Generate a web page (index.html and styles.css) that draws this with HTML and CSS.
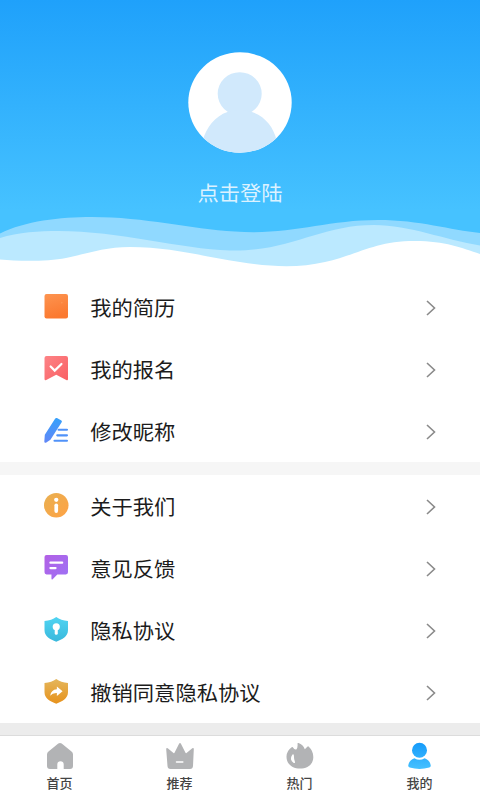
FILE: index.html
```html
<!DOCTYPE html>
<html lang="zh-CN">
<head>
<meta charset="utf-8">
<title>我的</title>
<link rel="stylesheet" href="styles.css">
</head>
<body>
<div class="page">
  <header class="hero">
    <svg class="avatar" viewBox="0 0 104 101">
      <defs><clipPath id="face"><ellipse cx="52" cy="50.5" rx="51.7" ry="50.2"/></clipPath></defs>
      <ellipse cx="52" cy="50.5" rx="51.7" ry="50.2" fill="#fff"/>
      <g clip-path="url(#face)" fill="#d1e9fc">
        <ellipse cx="51.7" cy="41.7" rx="22" ry="21.5"/>
        <path d="M15 101V88C18 76 27 64 39.500 60Q51.700 56 64 60C77 64 86 76 88.500 88V101Z"/>
      </g>
    </svg>
    <div class="login">点击登陆</div>
    <svg class="waves" viewBox="0 0 480 66">
      <path fill="#90d9ff" d="M0 23.500C25 11 60 7 92 7C145 7 190 19 235 21.500C290 25.500 325 10 378 10C420 10 450 20 480 23V66H0Z"/>
      <path fill="#bbe9ff" d="M0 28C18 22 40 21 58 21C120 21 180 39 230 40.500C290 42 320 15 374 15C410 15 445 30 480 35.500V66H0Z"/>
      <path fill="#fff" d="M0 49.500C20 51.500 48 51.500 66 48C90 43 105 37 130 37C172 37 205 47 240 52C270 57 300 58 325 52C360 44 375 31 415 31C445 31 462 38 480 44V66H0Z"/>
    </svg>
  </header>
  <main class="menu">
    <section class="group">
      <div class="row">
        <svg class="icon" viewBox="0 0 24 24"><defs><linearGradient id="or" x2="0.300" y2="1"><stop stop-color="#fd9450"/><stop offset="1" stop-color="#fb7930"/></linearGradient></defs><rect x=".5" width="23" height="24" rx="2" fill="url(#or)"/><circle cx="17.500" cy="8.500" r=".7" fill="#ff9c58"/></svg>
        <span class="label">我的简历</span><svg class="arrow" viewBox="0 0 10 16"><path d="M1 1l7.500 7L1 15"/></svg>
      </div>
      <div class="row">
        <svg class="icon" viewBox="0 0 24 24"><defs><linearGradient id="rd" x2="1" y2="1"><stop stop-color="#fd8386"/><stop offset="1" stop-color="#f96064"/></linearGradient></defs><path fill="url(#rd)" d="M2.500 0h19a2 2 0 0 1 2 2v20.500q0 2-1.700 1L12 18.300 2.200 23.600Q.5 24 .5 22.500V2a2 2 0 0 1 2-2Z"/><path class="line" d="M6.500 10.300l4 4 6.600-6.500"/></svg>
        <span class="label">我的报名</span><svg class="arrow" viewBox="0 0 10 16"><path d="M1 1l7.500 7L1 15"/></svg>
      </div>
      <div class="row">
        <svg class="icon" viewBox="0 0 24 24"><defs><linearGradient id="bl" x2="0" y2="1"><stop stop-color="#36a1fb"/><stop offset="1" stop-color="#6287f7"/></linearGradient></defs><path fill="url(#bl)" d="M11 .6q.7-1 1.700-.5l4.300 2.400q1 .7.300 1.700L6.300 21.200l-4 2.900Q.3 24.900.3 23.100L.8 16.500Z"/><path d="M14.300 11.500h8.200M13 17h9.500M10.300 22.300h12.200" fill="none" stroke="#5092f9" stroke-width="2.100" stroke-linecap="round"/></svg>
        <span class="label">修改昵称</span><svg class="arrow" viewBox="0 0 10 16"><path d="M1 1l7.500 7L1 15"/></svg>
      </div>
    </section>
    <section class="group">
      <div class="row">
        <svg class="icon" viewBox="0 0 24 24"><defs><linearGradient id="am" x2="1" y2="1"><stop stop-color="#e8b052"/><stop offset="1" stop-color="#ffa244"/></linearGradient></defs><circle cx="12" cy="12" r="12" fill="url(#am)"/><circle cx="12" cy="6.700" r="2.100" fill="#fff"/><path d="M12 12v5.700" stroke="#fff" stroke-width="3.600" stroke-linecap="round"/></svg>
        <span class="label">关于我们</span><svg class="arrow" viewBox="0 0 10 16"><path d="M1 1l7.500 7L1 15"/></svg>
      </div>
      <div class="row">
        <svg class="icon" viewBox="0 0 24 24"><defs><linearGradient id="pu" x2="1" y2="1"><stop stop-color="#b360e5"/><stop offset="1" stop-color="#9c72f5"/></linearGradient></defs><path fill="url(#pu)" d="M2.500 0h19a2 2 0 0 1 2 2v15a2 2 0 0 1-2 2H13l-4.500 4.700q-1.200.8-1.200-.7v-4H2.500a2 2 0 0 1-2-2V2a2 2 0 0 1 2-2Z"/><path class="line" d="M6.300 7.500h11.500M6.300 12.800h5"/></svg>
        <span class="label">意见反馈</span><svg class="arrow" viewBox="0 0 10 16"><path d="M1 1l7.500 7L1 15"/></svg>
      </div>
      <div class="row">
        <svg class="icon" viewBox="0 0 24 24"><defs><linearGradient id="cy" x2="0" y2="1"><stop stop-color="#50d4f2"/><stop offset="1" stop-color="#39b8dc"/></linearGradient></defs><path fill="url(#cy)" d="M12 0Q16.500 3.500 23.500 3.800V13C23.500 19 18 22 12 24.300C6 22 .5 19 .5 13V3.800Q7.500 3.500 12 0Z"/><circle cx="12" cy="9.500" r="3.500" fill="#fff"/><path d="M12 10v6" stroke="#fff" stroke-width="3" stroke-linecap="round"/></svg>
        <span class="label">隐私协议</span><svg class="arrow" viewBox="0 0 10 16"><path d="M1 1l7.500 7L1 15"/></svg>
      </div>
      <div class="row">
        <svg class="icon" viewBox="0 0 24 24"><defs><linearGradient id="go" x2="0" y2="1"><stop stop-color="#e4b65c"/><stop offset="1" stop-color="#e7921c"/></linearGradient></defs><path fill="url(#go)" d="M12 0Q16.500 3.500 23.500 3.800V13C23.500 19 18 22 12 24.300C6 22 .5 19 .5 13V3.800Q7.500 3.500 12 0Z"/><path fill="#fff" d="M12.600 7.400L18.200 12l-5.600 4.700v-2.900Q8.500 13.500 6 16.500Q6.800 10.500 12.600 10Z"/></svg>
        <span class="label">撤销同意隐私协议</span><svg class="arrow" viewBox="0 0 10 16"><path d="M1 1l7.500 7L1 15"/></svg>
      </div>
    </section>
  </main>
  <nav class="tabs">
    <div class="tab"><svg class="tab-icon" viewBox="0 0 28 28"><path d="M12.300 1.600q1.700-1.200 3.400 0L25.500 9.500q1.500 1.200 1.500 3V24q0 3-3 3h-6.300v-4.500a3.200 3.200 0 0 0-6.400 0V27H4q-3 0-3-3V12.500q0-1.800 1.500-3Z"/></svg><span>首页</span></div>
    <div class="tab"><svg class="tab-icon" viewBox="0 0 28 28"><path d="M1.700 6.200l5.800 4.800q.7.500 1-.2L13.200 1.500q.8-1.200 1.600 0l4.700 9.300q.3.700 1 .2l5.800-4.800q1.600-.7 1.500 1L27 24q-.2 3-3 3H4.500q-2.800 0-3-3L.2 7.200q0-1.700 1.500-1Z"/><path d="M10.500 20h6.300" stroke="#fff" stroke-width="1.500" stroke-linecap="round"/></svg><span>推荐</span></div>
    <div class="tab"><svg class="tab-icon" viewBox="0 0 28 28"><path d="M11.500 1.500q0-.8 1-.4Q17 2.500 18.800 7.200L21.600 4.500q.7-.5 1.200.2Q27.500 9 27.300 15.500C27 23 21 26.600 14 26.600S.3 22.500.5 14.500Q.7 8.500 6 5q.8-.3 1 .6Q8.300 8 10.300 7.500Q12 5.500 11.500 1.500Z"/><path d="M7 13.200Q4 17.500 8.200 20.200Q7 17 7 13.200Z" fill="#fff" stroke="#fff" stroke-width="1.700" stroke-linejoin="round"/></svg><span>热门</span></div>
    <div class="tab"><svg class="tab-icon" viewBox="0 0 28 28"><defs><linearGradient id="me" gradientUnits="userSpaceOnUse" x1="0" y1="1" x2="0" y2="27"><stop stop-color="#169bfa"/><stop offset="1" stop-color="#45c1ff"/></linearGradient></defs><g fill="url(#me)"><circle cx="13.500" cy="8.300" r="7.500"/><path d="M2.200 23.800Q3 18 8.400 16.300q5.100 3 10.200 0Q24 18 24.800 23.800q0 1.300-1.500 1.800Q13.500 28.300 3.700 25.600q-1.500-.5-1.500-1.800Z"/></g></svg><span>我的</span></div>
  </nav>
</div>
</body>
</html>
```
FILE: styles.css
```css
* { box-sizing: border-box; }
body {
  margin: 0;
  background: #fff;
  color: #1c1c1c;
  font-family: "Noto Sans CJK SC", sans-serif;
}
.page {
  display: flex;
  flex-direction: column;
  height: 800px;
  overflow: hidden;
}
.hero {
  display: flex;
  flex-direction: column;
  align-items: center;
  height: 276px;
  padding-top: 52px;
  background: linear-gradient(#1fa1fb 0, #46c2ff 210px);
}
.avatar { width: 104px; height: 101px; flex: none; }
.login {
  height: 32px;
  margin-top: 23px;
  line-height: 32px;
  font-size: 21.3px;
  color: #dcf2ff;
  transform: scaleY(.95);
}
.waves {
  display: block;
  width: 480px;
  height: 66px;
  margin-top: auto;
}
.menu {
  display: flex;
  flex-direction: column;
  gap: 13px;
  height: 459px;
  background: linear-gradient(#f6f6f6 50%, #ececec 50%);
}
.group { background: #fff; }
.row {
  display: flex;
  align-items: center;
  height: 62px;
  padding: 0 44px;
}
.icon {
  width: 24.5px;
  height: 24.5px;
  margin-bottom: 1px;
  overflow: visible;
}
.line {
  fill: none;
  stroke: #fff;
  stroke-width: 2.2;
  stroke-linecap: round;
}
.label {
  flex: 1;
  margin: 0 0 1px 21.7px;
  font-size: 21.3px;
  line-height: 32px;
  transform: scaleY(.95);
}
.arrow {
  width: 10px;
  height: 16px;
  margin-top: 1px;
}
.arrow path {
  fill: none;
  stroke: #8a8a8a;
  stroke-width: 1.6;
}
.tabs {
  display: flex;
  height: 65px;
  border-top: 1px solid #dcdcdc;
  background: #fff;
}
.tab {
  flex: 1;
  display: flex;
  flex-direction: column;
  align-items: center;
  padding: 6px 1px 0 0;
  font-size: 13px;
  line-height: 20px;
  color: #444;
  font-weight: 500;
}
.tab-icon {
  width: 28px;
  height: 28px;
  margin-bottom: 3px;
  fill: #b2b3b5;
}
```
